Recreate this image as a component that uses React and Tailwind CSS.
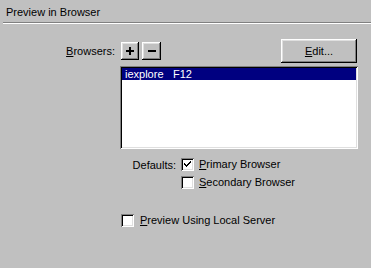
import React from 'react';

const raised = "shadow-[inset_-1px_-1px_0_#000,inset_1px_1px_0_#fff,inset_-2px_-2px_0_#808080,inset_2px_2px_0_#dfdfdf]";
const sunken = "shadow-[inset_1px_1px_0_#808080,inset_-1px_-1px_0_#fff,inset_2px_2px_0_#000,inset_-2px_-2px_0_#dfdfdf]";

const Checkbox = ({ checked }) => (
  <div className={`w-[13px] h-[13px] bg-white shrink-0 flex items-center justify-center ${sunken}`}>
    {checked && (
      <svg width="7" height="7" viewBox="0 0 7 7">
        <path d="M0 2h1v1h1v1h1V3h1V2h1V1h1V0h1v2H6v1H5v1H4v1H3v1H2V5H1V4H0z" fill="#000" />
      </svg>
    )}
  </div>
);

const U = ({ children }) => <span className="underline underline-offset-[1px]">{children}</span>;

export default function App() {
  return (
    <div className="w-[371px] h-[268px] bg-[#c0c0c0] text-black text-[11px] leading-none overflow-hidden" style={{ fontFamily: '"Liberation Sans", Arial, sans-serif' }}>
      <div className="pl-[6px] pt-[7px] h-[22px] text-[11px]">Preview in Browser</div>
      <div className="ml-[3px] h-[2px] border-t border-[#808080] border-b border-b-white" />

      <div className="flex mt-[15px]">
        <div className="w-[120px] pr-[5px] flex items-center justify-end h-[24px]">
          <span><U>B</U>rowsers:</span>
        </div>
        <div className="w-[238px]">
          <div className="flex items-center h-[24px]">
            <button className={`w-[18px] h-[18px] bg-[#c0c0c0] ml-[1px] flex items-center justify-center ${raised}`}>
              <svg width="8" height="8" viewBox="0 0 8 8"><path d="M3 0h2v3h3v2H5v3H3V5H0V3h3z" fill="#000" /></svg>
            </button>
            <button className={`w-[19px] h-[18px] bg-[#c0c0c0] ml-[3px] flex items-center justify-center ${raised}`}>
              <svg width="8" height="2" viewBox="0 0 8 2"><path d="M0 0h8v2H0z" fill="#000" /></svg>
            </button>
            <div className="flex-1" />
            <button className={`w-[76px] h-[24px] bg-[#c0c0c0] mr-[1px] flex items-center justify-center ${raised}`}>
              <span><U>E</U>dit...</span>
            </button>
          </div>
          <div className={`mt-[3px] h-[83px] bg-white p-[2px] ${sunken}`}>
            <div className="bg-[#000080] text-white h-[12px] flex items-center pl-[3px]">
              <span className="w-[48px]">iexplore</span>
              <span>F12</span>
            </div>
          </div>
        </div>
      </div>

      <div className="flex mt-[9px]">
        <div className="w-[181px] pr-[5px] flex justify-end pt-[2px]">Defaults:</div>
        <div className="flex flex-col gap-[5px]">
          <div className="flex items-center gap-[5px]">
            <Checkbox checked />
            <span><U>P</U>rimary Browser</span>
          </div>
          <div className="flex items-center gap-[5px]">
            <Checkbox />
            <span><U>S</U>econdary Browser</span>
          </div>
        </div>
      </div>

      <div className="flex items-center gap-[6px] ml-[121px] mt-[25px]">
        <Checkbox />
        <span><U>P</U>review Using Local Server</span>
      </div>
    </div>
  );
}
